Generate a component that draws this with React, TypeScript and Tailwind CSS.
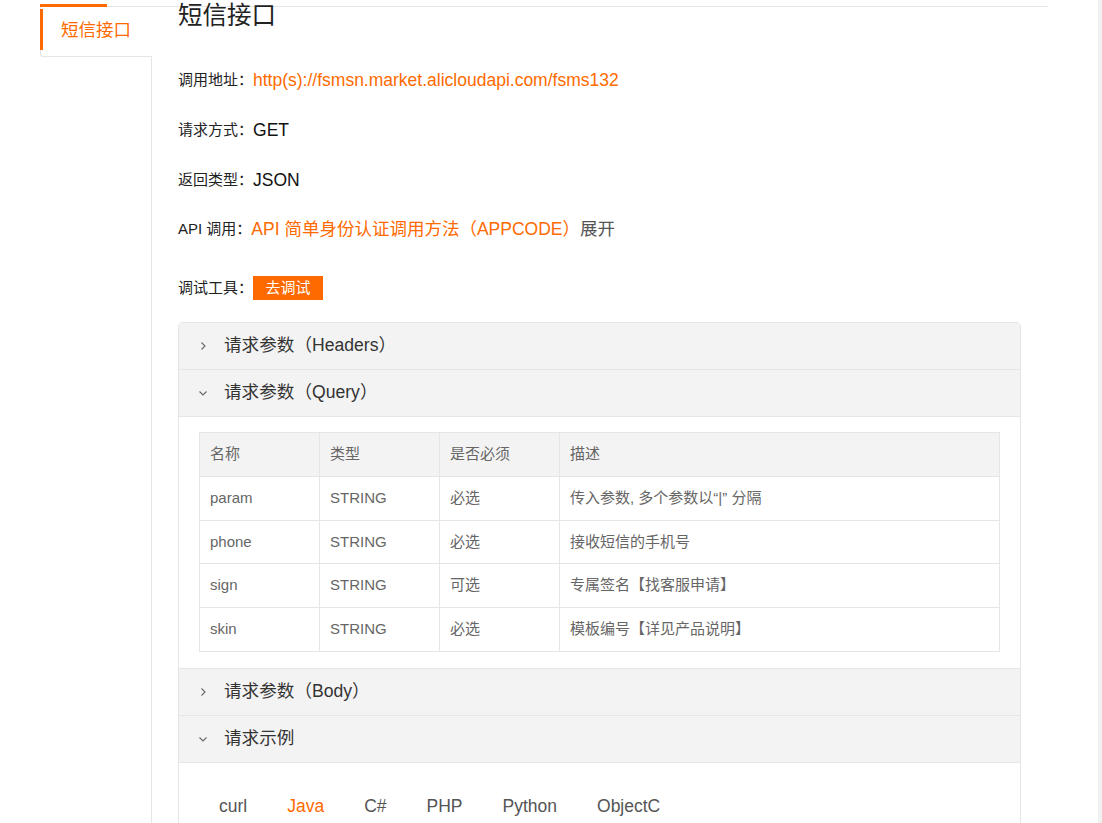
import React from "react";

const ORANGE = "text-[#ff6a00]";

function Chevron({ open }: { open: boolean }) {
  return (
    <svg width="12" height="12" viewBox="0 0 12 12" className="shrink-0">
      {open ? (
        <polyline points="2.5,4.5 6,8 9.5,4.5" fill="none" stroke="#666" strokeWidth="1.1" />
      ) : (
        <polyline points="4.5,2.5 8,6 4.5,9.5" fill="none" stroke="#666" strokeWidth="1.1" />
      )}
    </svg>
  );
}

function PanelHeader({ title, open }: { title: string; open: boolean }) {
  return (
    <div className="h-[47px] bg-[#f3f3f3] border-b border-[#e6e6e6] flex items-center pl-[18px]">
      <Chevron open={open} />
      <span className="ml-[15px] text-[17.6px] text-[#333] leading-none">{title}</span>
    </div>
  );
}

const rows = [
  ["param", "STRING", "必选", "传入参数, 多个参数以“|” 分隔", "h-[44px]"],
  ["phone", "STRING", "必选", "接收短信的手机号", "h-[43px]"],
  ["sign", "STRING", "可选", "专属签名【找客服申请】", "h-[44px]"],
  ["skin", "STRING", "必选", "模板编号【详见产品说明】", "h-[44px]"],
];

export default function App() {
  return (
    <div
      className="w-[1102px] h-[823px] overflow-hidden bg-white flex"
      style={{ fontFamily: '"Liberation Sans", "Noto Sans CJK SC", sans-serif' }}
    >
      <div className="w-[1098px] pl-[40px] pt-[4px] flex flex-col">
        {/* top line */}
        <div className="flex w-[1008px] shrink-0">
          <div className="w-[67px] h-[3px] bg-[#ff6a00]" />
          <div className="flex-1 h-[3px] border-b border-[#e5e5e5]" />
        </div>
        <div className="flex flex-1 min-h-0">
          {/* sidebar */}
          <div className="w-[112px] flex flex-col shrink-0">
            <div className="h-[50px] shrink-0 border-l border-b border-[#e5e5e5] rounded-bl-[3px] flex">
              <div className="w-[3px] h-[41px] mt-[2px] -ml-px bg-[#ff6a00]" />
              <div className={`pl-[18px] pt-[12px] text-[17.5px] leading-[22px] ${ORANGE}`}>短信接口</div>
            </div>
            <div className="flex-1 border-r border-[#e5e5e5]" />
          </div>
          {/* content */}
          <div className="ml-[26px] w-[843px] shrink-0">
            <div className="-mt-[3px] h-[24px] text-[24.5px] leading-[24px] text-[#222]">短信接口</div>
            <div className="h-[27px]" />
            <div className="h-[50px] flex items-center">
              <span className="text-[15px] text-[#222]">调用地址：</span>
              <span className={`text-[17.5px] ${ORANGE}`}>http(s)://fsmsn.market.alicloudapi.com/fsms132</span>
            </div>
            <div className="h-[50px] flex items-center">
              <span className="text-[15px] text-[#222]">请求方式：</span>
              <span className="text-[17.5px] text-[#111]">GET</span>
            </div>
            <div className="h-[50px] flex items-center">
              <span className="text-[15px] text-[#222]">返回类型：</span>
              <span className="text-[17.5px] text-[#111]">JSON</span>
            </div>
            <div className="h-[49px] flex items-center">
              <span className="text-[15px] text-[#222]">API 调用：</span>
              <span className={`text-[17.5px] ${ORANGE}`}>API 简单身份认证调用方法（APPCODE）</span>
              <span className="text-[17.5px] text-[#555]">展开</span>
            </div>
            <div className="h-[59px] flex items-center pt-[9px]">
              <span className="text-[15px] text-[#222]">调试工具：</span>
              <span className="w-[70px] h-[24px] bg-[#ff6a00] text-white text-[15px] flex items-center justify-center">
                去调试
              </span>
            </div>
            <div className="h-[9px]" />
            {/* card */}
            <div className="border border-[#e5e5e5] rounded-[4px] flex flex-col">
              <PanelHeader title="请求参数（Headers）" open={false} />
              <PanelHeader title="请求参数（Query）" open={true} />
              <div className="px-[20px] pt-[15px] pb-[16px] border-b border-[#e6e6e6]">
                <table className="w-[801px] border-collapse text-[15px] text-[#666]">
                  <thead>
                    <tr className="bg-[#f3f3f3] h-[44px]">
                      <th className="w-[120px] border border-[#e5e5e5] text-left font-normal pl-[10px]">名称</th>
                      <th className="w-[120px] border border-[#e5e5e5] text-left font-normal pl-[10px]">类型</th>
                      <th className="w-[120px] border border-[#e5e5e5] text-left font-normal pl-[10px]">是否必须</th>
                      <th className="border border-[#e5e5e5] text-left font-normal pl-[10px]">描述</th>
                    </tr>
                  </thead>
                  <tbody>
                    {rows.map((r, i) => (
                      <tr key={i} className={r[4]}>
                        {r.slice(0, 4).map((c, j) => (
                          <td key={j} className="border border-[#e5e5e5] pl-[10px]">
                            {c}
                          </td>
                        ))}
                      </tr>
                    ))}
                  </tbody>
                </table>
              </div>
              <PanelHeader title="请求参数（Body）" open={false} />
              <PanelHeader title="请求示例" open={true} />
              <div className="h-[100px] pl-[20px] pt-[33px] flex text-[17.5px] text-[#555]">
                <span className="px-[20px] h-[20px] leading-[20px]">curl</span>
                <span className={`px-[20px] h-[20px] leading-[20px] ${ORANGE}`}>Java</span>
                <span className="px-[20px] h-[20px] leading-[20px]">C#</span>
                <span className="px-[20px] h-[20px] leading-[20px]">PHP</span>
                <span className="px-[20px] h-[20px] leading-[20px]">Python</span>
                <span className="px-[20px] h-[20px] leading-[20px]">ObjectC</span>
              </div>
            </div>
          </div>
        </div>
      </div>
      <div className="w-[4px] bg-[#f1f1f1]" />
    </div>
  );
}
